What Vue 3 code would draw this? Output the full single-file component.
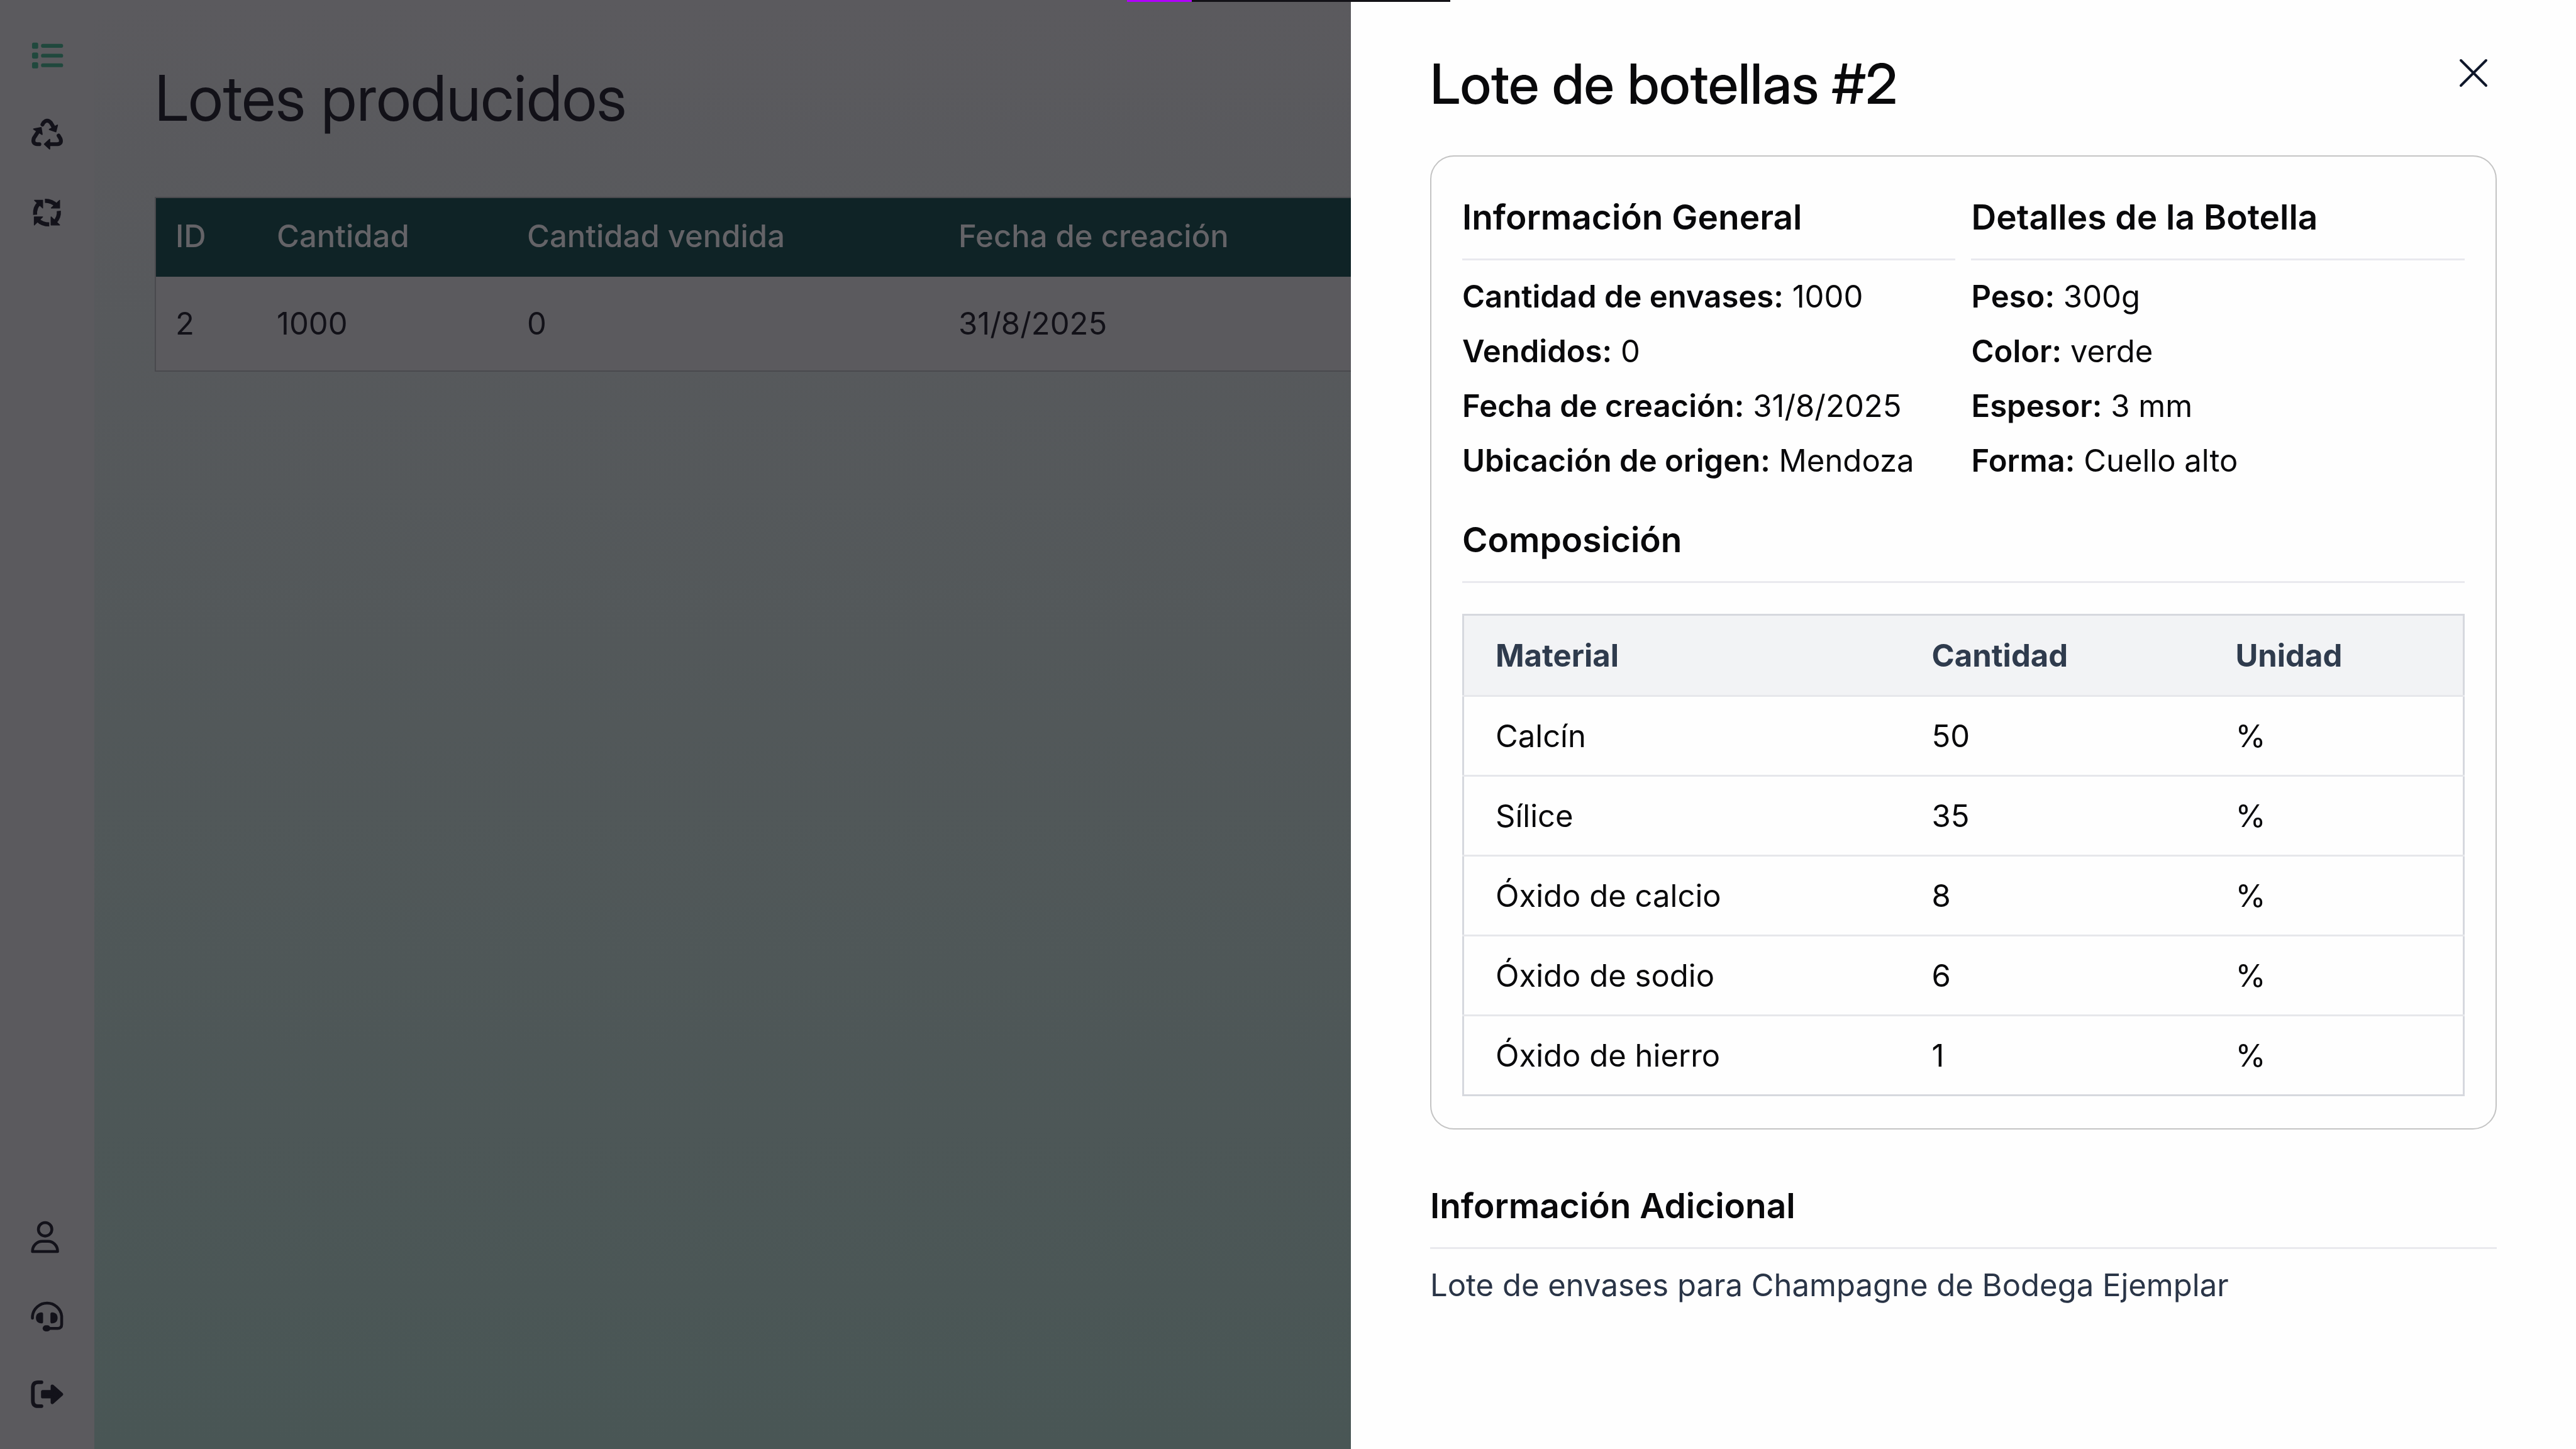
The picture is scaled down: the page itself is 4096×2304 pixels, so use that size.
<script setup>
const lots = [{ id: 2, amount: 1000, sold: 0, created: '31/8/2025' }]

const general = [
  { label: 'Cantidad de envases:', value: '1000' },
  { label: 'Vendidos:', value: '0' },
  { label: 'Fecha de creación:', value: '31/8/2025' },
  { label: 'Ubicación de origen:', value: 'Mendoza' },
]

const bottle = [
  { label: 'Peso:', value: '300g' },
  { label: 'Color:', value: 'verde' },
  { label: 'Espesor:', value: '3 mm' },
  { label: 'Forma:', value: 'Cuello alto' },
]

const composition = [
  { material: 'Calcín', amount: 50, unit: '%' },
  { material: 'Sílice', amount: 35, unit: '%' },
  { material: 'Óxido de calcio', amount: 8, unit: '%' },
  { material: 'Óxido de sodio', amount: 6, unit: '%' },
  { material: 'Óxido de hierro', amount: 1, unit: '%' },
]
</script>

<template>
  <div class="page">
    <nav class="sidebar">
      <div class="group">
        <button type="button" class="nav-item active" aria-label="Lotes">
          <svg viewBox="0 0 160 160" fill="currentColor">
            <rect x="6" y="18" width="30" height="30" rx="8" />
            <rect x="6" y="66" width="30" height="30" rx="8" />
            <rect x="6" y="114" width="30" height="30" rx="8" />
            <rect x="50" y="24" width="108" height="19" rx="9" />
            <rect x="50" y="72" width="108" height="19" rx="9" />
            <rect x="50" y="119" width="108" height="19" rx="9" />
          </svg>
        </button>
        <button type="button" class="nav-item" aria-label="Reciclaje">
          <svg viewBox="0 0 160 160" fill="none" stroke="currentColor" stroke-width="19" stroke-linecap="round">
            <path d="M57 34 L62 25 Q80 5 98 25 L110 45" />
            <path d="M37 66 L15 100 Q6 128 30 130 H42" />
            <path d="M136 88 L145 103 Q154 128 130 130 H88" />
            <g fill="currentColor" stroke-width="6" stroke-linejoin="round">
              <path d="M130 37 L122 69 L91 58 Z" />
              <path d="M14 56 L50 49 L55 82 Z" />
              <path d="M67 130 L92 107 V153 Z" />
            </g>
          </svg>
        </button>
        <button type="button" class="nav-item" aria-label="Ciclos">
          <svg viewBox="0 0 160 160" fill="none" stroke="currentColor" stroke-width="20">
            <path d="M21 91 Q18 55 42 34" />
            <path d="M69 22 Q105 22 126 46" />
            <path d="M137 72 Q140 105 116 127" />
            <path d="M90 138 Q55 138 34 116" />
            <g fill="currentColor" stroke-width="4" stroke-linejoin="round">
              <path d="M18 20 H58 V58 Z" />
              <path d="M141 20 V58 H100 Z" />
              <path d="M99 101 V141 H141 Z" />
              <path d="M17 141 V101 H58 Z" />
            </g>
          </svg>
        </button>
      </div>
      <div class="group">
        <button type="button" class="nav-item" aria-label="Perfil">
          <svg viewBox="0 0 160 160" fill="none" stroke="currentColor" stroke-width="14" stroke-linejoin="round">
            <circle cx="70" cy="42" r="33" />
            <path d="M8 151 C8 121 30 101 56 101 H84 C110 101 131 121 131 151 Z" />
          </svg>
        </button>
        <button type="button" class="nav-item" aria-label="Soporte">
          <svg viewBox="0 0 160 160" fill="none" stroke="currentColor" stroke-width="14" stroke-linecap="round">
            <path d="M8 92 V82 A72 72 0 0 1 151 82 V122 Q151 142 131 142 H84" />
            <g fill="currentColor" stroke="none">
              <path d="M60 72 V110 Q60 118 52 118 C34 118 25 106 25 91 C25 76 34 64 52 64 Q60 64 60 72 Z" />
              <path d="M96 72 V110 Q96 118 104 118 C122 118 131 106 131 91 C131 76 122 64 104 64 Q96 64 96 72 Z" />
              <rect x="58" y="127" width="38" height="30" rx="15" />
            </g>
          </svg>
        </button>
        <button type="button" class="nav-item" aria-label="Salir">
          <svg viewBox="0 0 160 160" fill="none" stroke="currentColor" stroke-width="18" stroke-linecap="round">
            <path d="M52 21 H36 Q10 21 10 47 V112 Q10 138 36 138 H52" />
            <path
              d="M58 67 H105 V40 L150 80 L105 120 V92 H58 Z"
              fill="currentColor"
              stroke-width="16"
              stroke-linejoin="round"
            />
          </svg>
        </button>
      </div>
    </nav>

    <main class="main">
      <h1>Lotes producidos</h1>
      <table class="lots">
        <colgroup>
          <col class="lot-id" />
          <col class="lot-amount" />
          <col class="lot-sold" />
          <col />
        </colgroup>
        <thead>
          <tr>
            <th>ID</th>
            <th>Cantidad</th>
            <th>Cantidad vendida</th>
            <th>Fecha de creación</th>
          </tr>
        </thead>
        <tbody>
          <tr v-for="lot in lots" :key="lot.id">
            <td>{{ lot.id }}</td>
            <td>{{ lot.amount }}</td>
            <td>{{ lot.sold }}</td>
            <td>{{ lot.created }}</td>
          </tr>
        </tbody>
      </table>
    </main>

    <aside class="drawer">
      <header class="drawer-head">
        <h2>Lote de botellas #2</h2>
        <button type="button" class="close" aria-label="Cerrar">
          <svg viewBox="0 0 48 48" fill="none" stroke="currentColor" stroke-width="4" stroke-linecap="round">
            <path d="M4 4 L44 44 M44 4 L4 44" />
          </svg>
        </button>
      </header>

      <section class="card">
        <div class="columns">
          <div>
            <h3>Información General</h3>
            <p v-for="row in general" :key="row.label">
              <strong>{{ row.label }}</strong> {{ row.value }}
            </p>
          </div>
          <div>
            <h3>Detalles de la Botella</h3>
            <p v-for="row in bottle" :key="row.label">
              <strong>{{ row.label }}</strong> {{ row.value }}
            </p>
          </div>
        </div>
        <h3 class="composition-title">Composición</h3>
        <table class="composition">
          <thead>
            <tr>
              <th class="material">Material</th>
              <th class="amount">Cantidad</th>
              <th>Unidad</th>
            </tr>
          </thead>
          <tbody>
            <tr v-for="row in composition" :key="row.material">
              <td>{{ row.material }}</td>
              <td>{{ row.amount }}</td>
              <td>{{ row.unit }}</td>
            </tr>
          </tbody>
        </table>
      </section>

      <section class="extra">
        <h3>Información Adicional</h3>
        <p>Lote de envases para Champagne de Bodega Ejemplar</p>
      </section>
    </aside>

    <div class="progress"><span></span></div>
  </div>
</template>

<style>
body {
  margin: 0;
}
</style>

<style scoped>
.page {
  position: relative;
  display: flex;
  min-height: 100vh;
  overflow: hidden;
  font-family: Inter, 'Liberation Sans', sans-serif;
  font-size: 49px;
  line-height: 87px;
  color: #09090b;
  background: linear-gradient(180deg, #5b5a5e, #495655);
}

h1,
h2,
h3,
p {
  margin: 0;
}

button {
  padding: 0;
  border: 0;
  background: none;
  cursor: pointer;
}

svg {
  display: block;
  width: 100%;
  height: 100%;
}

table {
  width: 100%;
  border-collapse: collapse;
  table-layout: fixed;
}

th,
td {
  text-align: left;
}

.sidebar {
  display: flex;
  flex-direction: column;
  justify-content: space-between;
  align-items: center;
  flex: none;
  box-sizing: border-box;
  width: 150px;
  padding: 62px 0 61px;
  background: #5b5a5e;
}

.group {
  display: flex;
  flex-direction: column;
  gap: 73px;
}

.nav-item {
  width: 52px;
  height: 52px;
  color: #13121a;
}

.nav-item.active {
  color: #20483d;
}

.main {
  flex: 1;
  padding: 94px 96px;
  color: #121118;
}

h1 {
  margin-bottom: 95px;
  font-family: 'Inter Display', Inter, 'Liberation Sans', sans-serif;
  font-size: 100px;
  line-height: 124px;
  font-weight: 400;
  font-variation-settings: 'opsz' 32;
}

.lots {
  background: #5b5a5e;
  border: 2px solid #49494d;
}

.lots .lot-id {
  width: 162px;
}

.lots .lot-amount {
  width: 398px;
}

.lots .lot-sold {
  width: 686px;
}

.lots thead {
  background: #0f2326;
}

.lots th {
  height: 120px;
  padding: 0 31px 5px;
  font-weight: 500;
  color: #646367;
}

.lots td {
  height: 149px;
  padding: 0 31px;
}

.drawer {
  position: absolute;
  top: 0;
  right: 0;
  bottom: 0;
  box-sizing: border-box;
  width: 47.56%;
  padding: 78px 126px;
  background: #fefefe;
}

.drawer-head {
  display: flex;
  justify-content: space-between;
  align-items: flex-start;
  margin-bottom: 59px;
}

h2 {
  font-family: 'Inter Display', Inter, 'Liberation Sans', sans-serif;
  font-size: 88px;
  line-height: 110px;
  font-weight: 500;
  font-variation-settings: 'opsz' 32;
}

.close {
  width: 48px;
  height: 48px;
  margin: 14px 13px;
  color: #0f172a;
}

.card {
  padding: 50px 49px 51px;
  border: 2px solid #c4c4c4;
  border-radius: 38px;
}

.columns {
  display: grid;
  grid-template-columns: 1fr 1fr;
  gap: 25px;
}

h3 {
  margin-bottom: 14px;
  padding-bottom: 20px;
  border-bottom: 3px solid #e9e9ee;
  font-size: 55px;
  line-height: 92px;
  font-weight: 600;
}

strong {
  font-weight: 600;
}

.composition-title {
  margin-top: 36px;
  margin-bottom: 49px;
}

.composition {
  border: 3px solid #d6d8de;
}

.composition .material {
  width: 695px;
}

.composition .amount {
  width: 483px;
}

.composition th,
.composition td {
  box-sizing: border-box;
  height: 127px;
  padding: 0 50px;
}

.composition th {
  height: 129px;
  font-weight: 700;
  color: #2f3b4d;
  background: #f2f3f5;
}

.composition tbody tr {
  border-top: 3px solid #e6e7eb;
}

.extra {
  margin-top: 75px;
}

.extra p {
  color: #2a3547;
}

.progress {
  position: absolute;
  top: 0;
  left: 43.75%;
  width: 514px;
  height: 3px;
  background: #131217;
}

.progress span {
  display: block;
  width: 20%;
  height: 3px;
  background: #b200ff;
}
</style>
